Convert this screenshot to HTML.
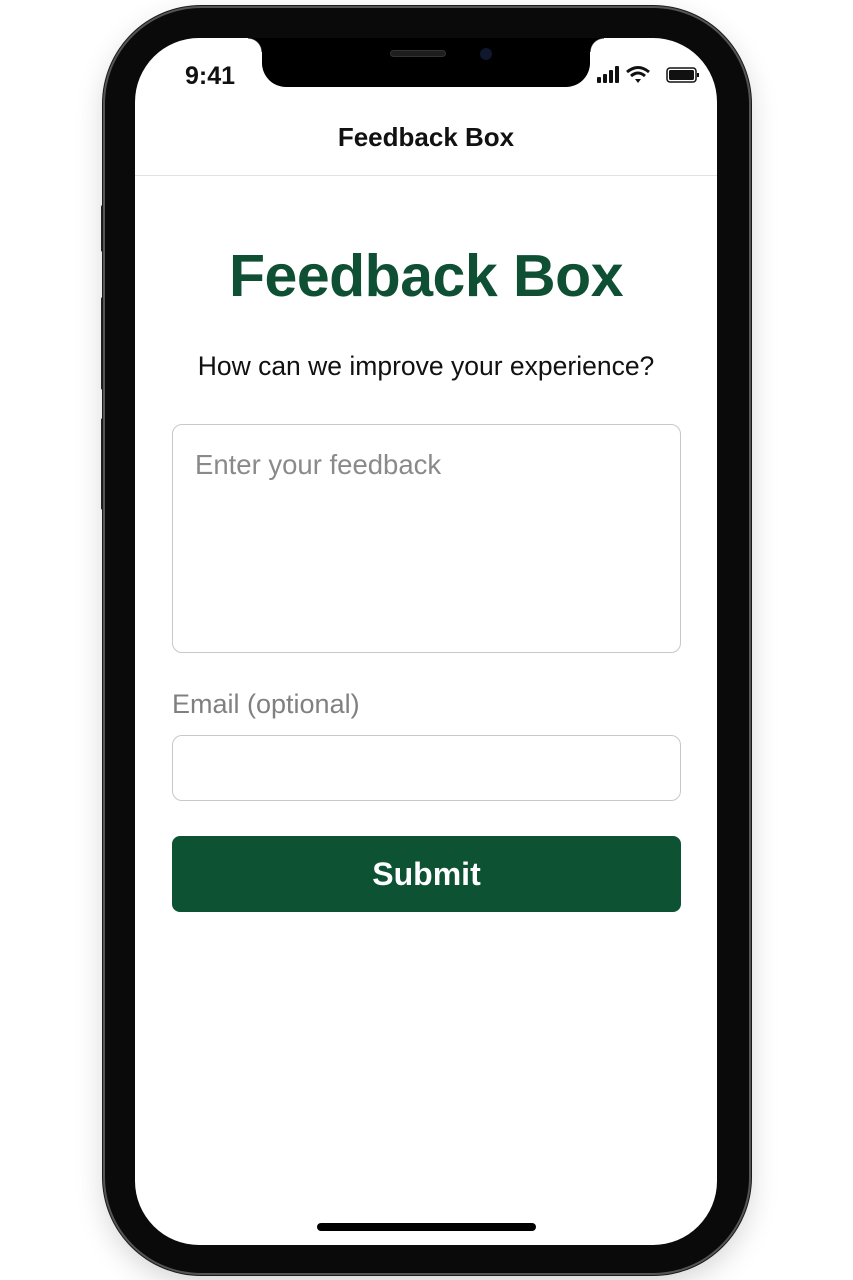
<!DOCTYPE html>
<html><head><meta charset="utf-8"><style>
*{margin:0;padding:0;box-sizing:border-box}
body{width:853px;height:1280px;background:#fff;position:relative;overflow:hidden;font-family:"Liberation Sans",sans-serif}
.phone{position:absolute;left:105px;top:8px;width:644px;height:1265px;border-radius:96px;background:#0a0a0a;box-shadow:0 0 0 2px #555,0 0 0 3px #1a1a1a,0 10px 30px rgba(0,0,0,.18)}
.screen{position:absolute;left:135px;top:38px;width:582px;height:1207px;border-radius:64px;background:#fff;overflow:hidden}
.notch{position:absolute;left:127px;top:0;width:328px;height:49px;background:#000;border-radius:0 0 24px 24px}
.notch:before,.notch:after{content:"";position:absolute;left:-14px;top:0;width:14px;height:14px;background:radial-gradient(circle at 0 100%,transparent 13px,#000 14px)}
.notch:after{left:auto;right:-14px;background:radial-gradient(circle at 100% 100%,transparent 13px,#000 14px)}
.spk{position:absolute;left:128px;top:12px;width:56px;height:7px;border-radius:4px;background:#1e1e1e;border:1px solid #333}
.cam{position:absolute;left:218px;top:10px;width:12px;height:12px;border-radius:50%;background:#10182e}
.btn{position:absolute;background:#222;width:5px;border-radius:2px}
.t{position:absolute;color:#111}
</style></head><body>
<div class="btn" style="left:101px;top:205px;height:47px"></div>
<div class="btn" style="left:101px;top:297px;height:93px"></div>
<div class="btn" style="left:101px;top:418px;height:92px"></div>
<div class="btn" style="left:746px;top:327px;height:153px"></div>
<div class="phone"></div>
<div class="screen">
 <div class="notch"><div class="spk"></div><div class="cam"></div></div>
 <div class="t" style="left:50px;top:24px;font-size:25px;font-weight:bold">9:41</div>
 <svg style="position:absolute;left:460px;top:27px" width="105" height="20" viewBox="0 0 105 20">
  <rect x="2" y="12" width="4" height="6" rx="1" fill="#111"/><rect x="8" y="9" width="4" height="9" rx="1" fill="#111"/><rect x="14" y="5" width="4" height="13" rx="1" fill="#111"/><rect x="20" y="1" width="4" height="17" rx="1" fill="#111"/>
  <path d="M32 7 Q43 -2 54 7" stroke="#111" stroke-width="3" fill="none"/><path d="M36 11 Q43 5 50 11" stroke="#111" stroke-width="3" fill="none"/><path d="M40 14 L43 18 L46 14 Z" fill="#111"/>
  <rect x="72" y="3" width="29" height="14" rx="3" stroke="#111" stroke-width="1.5" fill="none"/><rect x="74" y="5" width="25" height="10" rx="1.5" fill="#111"/><rect x="102" y="8" width="2" height="4" fill="#111"/>
 </svg>
 <div class="t" style="left:0;width:582px;text-align:center;top:84px;font-size:26px;font-weight:bold">Feedback Box</div>
 <div style="position:absolute;left:0;top:137px;width:582px;height:1px;background:#e2e2e2"></div>
 <div style="position:absolute;left:0;width:582px;text-align:center;top:204px;font-size:59px;font-weight:bold;color:#0f4f33;letter-spacing:-0.5px">Feedback Box</div>
 <div class="t" style="left:0;width:582px;text-align:center;top:313px;font-size:26.5px">How can we improve your experience?</div>
 <div style="position:absolute;left:37px;top:386px;width:509px;height:229px;border:1px solid #c8c8c8;border-radius:10px"></div>
 <div style="position:absolute;left:60px;top:411px;font-size:27.5px;color:#8a8a8a">Enter your feedback</div>
 <div style="position:absolute;left:37px;top:651px;font-size:27px;color:#808080">Email (optional)</div>
 <div style="position:absolute;left:37px;top:697px;width:509px;height:66px;border:1px solid #c8c8c8;border-radius:10px"></div>
 <div style="position:absolute;left:37px;top:798px;width:509px;height:76px;background:#0c5233;border-radius:8px;color:#fff;font-size:32px;font-weight:bold;text-align:center;line-height:76px">Submit</div>
 <div style="position:absolute;left:182px;top:1185px;width:219px;height:8px;border-radius:4px;background:#000"></div>
</div>
</body></html>
